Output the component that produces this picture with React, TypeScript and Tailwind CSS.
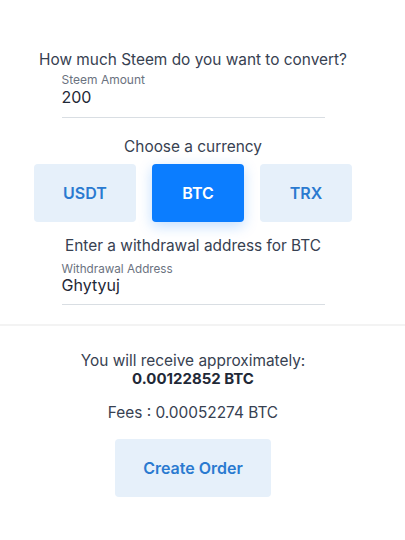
import React from "react";

export default function App() {
  return (
    <div className="w-[405px] h-[540px] bg-white text-[#374151]" style={{ fontFamily: "Inter, 'Noto Sans', sans-serif" }}>
      <div className="w-[386px] flex flex-col items-center pt-[48px]">
        <div className="text-[15.4px] leading-[24px]">How much Steem do you want to convert?</div>
        <div className="w-[263px] mt-[0px] border-b border-[#d9dee3] pb-[11px]">
          <div className="text-[12px] leading-[16px] text-[#6b7280]">Steem Amount</div>
          <div className="text-[16px] leading-[18px] text-[#1f2937]">200</div>
        </div>
        <div className="text-[15.4px] leading-[24px] mt-[17px]">Choose a currency</div>
        <div className="flex gap-[16px] mt-[5px]">
          <button className="w-[102px] h-[58px] rounded-[4px] bg-[#e6f0fa] text-[#2a7ad0] font-semibold text-[16px]">USDT</button>
          <button className="w-[92px] h-[58px] rounded-[4px] bg-[#0b7dff] text-white font-semibold text-[16px] shadow-[0_4px_14px_rgba(11,125,255,0.25)]">BTC</button>
          <button className="w-[92px] h-[58px] rounded-[4px] bg-[#e6f0fa] text-[#2a7ad0] font-semibold text-[16px]">TRX</button>
        </div>
        <div className="text-[15.4px] leading-[24px] mt-[12px]">Enter a withdrawal address for BTC</div>
        <div className="w-[263px] mt-[3px] border-b border-[#d9dee3] pb-[10px]">
          <div className="text-[11.7px] leading-[16px] text-[#6b7280]">Withdrawal Address</div>
          <div className="text-[16px] leading-[17px] text-[#1f2937]">Ghytyuj</div>
        </div>
      </div>
      <div className="w-[405px] h-[2px] bg-[#f3f3f3] mt-[19px]"></div>
      <div className="w-[386px] flex flex-col items-center pt-[26px]">
        <div className="text-[15.4px] leading-[18px]">You will receive approximately:</div>
        <div className="text-[15px] leading-[18px] font-bold text-[#1f2937]">0.00122852 BTC</div>
        <div className="text-[15.4px] leading-[24px] mt-[13px]">Fees : 0.00052274 BTC</div>
        <button className="mt-[14px] w-[156px] h-[58px] rounded-[4px] bg-[#e6f0fa] text-[#2a7ad0] font-semibold text-[16px]">Create Order</button>
      </div>
    </div>
  );
}
